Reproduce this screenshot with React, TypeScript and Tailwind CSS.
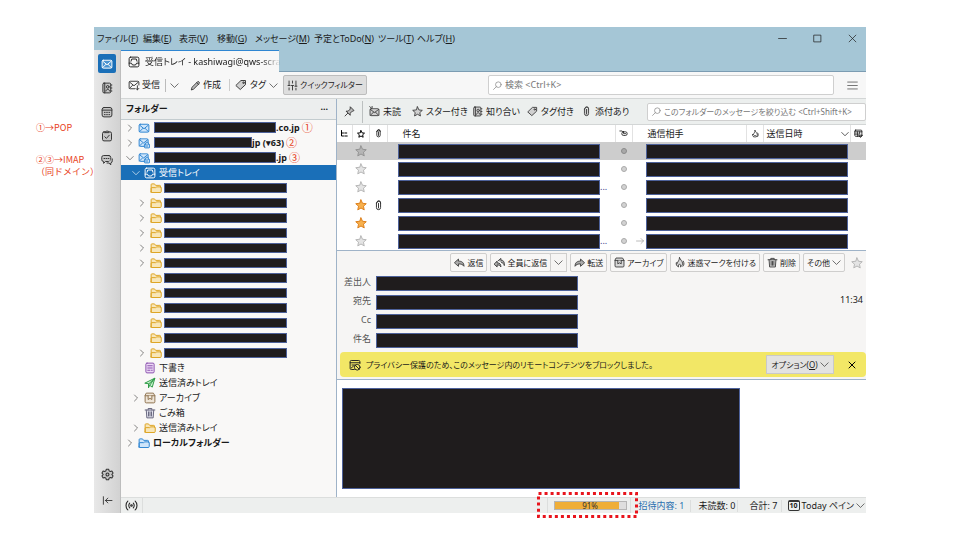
import type { ReactNode } from 'react';
import clsx from 'clsx';

const icons: Record<string, ReactNode> = {
  mail: <><rect x="1.5" y="3" width="13" height="10.5" rx="1.5" /><path d="M2 4l6 5 6-5M2 13l4.5-4.5M14 13L9.5 8.5" /></>,
  getMail: <><path d="M9 13H3a1.5 1.5 0 0 1-1.5-1.5v-7A1.5 1.5 0 0 1 3 3h10a1.5 1.5 0 0 1 1.5 1.5V8" /><path d="M2 4l6 5 6-5M2 12.5l4-4M12.5 9v5.5M10.5 12.5l2 2 2-2" /></>,
  imap: <><rect x="1.5" y="2.5" width="12" height="10" rx="1.5" /><path d="M2 3.5l5.5 4.5L13 3.5M2 12l4-4" /><rect x="8.5" y="9.5" width="7" height="5" rx="1" fill="#cfe5fa" /><path d="M10 9.5l1-2.5h2l1 2.5M10 12h3" /></>,
  address: <><rect x="2.5" y="1.5" width="10.5" height="13" rx="1.5" /><path d="M5 1.5v13M13 4h1.5M13 8h1.5M13 12h1.5M6.5 12c.3-3 4.7-3 5 0" /><circle cx="9" cy="6.5" r="1.8" /></>,
  calendar: <><rect x="1.5" y="2" width="13" height="12.5" rx="2.5" /><path d="M1.5 5.5h13" /><path d="M4.5 8.5h7M4.5 11.5h7" strokeDasharray="1 2" /></>,
  tasks: <><rect x="2" y="2.5" width="12" height="12" rx="2" /><path d="M5.5 2.5c0-1.5 5-1.5 5 0v1h-5zM5 9l2.2 2.2L11 7" /></>,
  chat: <><path d="M10.5 2h-7A2.5 2.5 0 0 0 1 4.5v3A2.5 2.5 0 0 0 3.5 10v2.5L6 10h4.500A2.500 2.500 0 0 0 13 7.500v-3A2.500 2.500 0 0 0 10.500 2z" /><path d="M15 6.5V9a3 3 0 0 1-2 3v2.500L10.500 12H8" /><path d="M4 6h6.500" strokeDasharray="1 1.800" /></>,
  gear: <><path d="M6.6 1.5h2.8l.6 2 1.4.8 2-.5 1.4 2.4L13.3 8l1.5 1.8-1.4 2.4-2-.5-1.4.8-.6 2H6.6l-.6-2-1.4-.8-2 .5-1.4-2.4L2.700 8 1.200 6.200l1.400-2.400 2 .5L6 3.500z" /><circle cx="8" cy="8" r="1.8" /></>,
  collapse: <path d="M2 2.5v11M14.5 8H5M8.5 4.5L5 8l3.5 3.5" />,
  inbox: <><rect x="1.5" y="1.5" width="13" height="13" rx="2" /><path d="M1.5 9.5h3L6 12h4l1.5-2.5h3M4 7l1-3h6l1 3" /></>,
  pencil: <path d="M2 14l1-3.5L11 2.5c1.2-1 3.5 1 2.5 2.5L5.5 13zM10 4l2.5 2.5" />,
  tag: <><path d="M8.5 2H14v5.5l-7 6.5L1.5 9z" /><circle cx="11.3" cy="5" r="1" /></>,
  sliders: <path d="M3 1.5V8M3 11.5v3M1.5 8h3M8 1.5v3M8 8v6.5M6.5 8h3M13 1.5V9M13 12v2.5M11.5 9h3" />,
  search: <><circle cx="9.5" cy="6.5" r="5" /><path d="M6 10l-5 5" /></>,
  menu: <path d="M1 3h14M1 8h14M1 13h14" />,
  pin: <path d="M9.5 1.5l5 5-1.5 1h-1l-3 3v3l-6-6h3l3-3v-1zM5.500 10.500l-4 4" />,
  unread: <><rect x="1.5" y="4" width="13" height="10" rx="1.5" /><path d="M2 5l6 4.5L14 5M2 13.5L6.500 9M14 13.500L9.500 9M1 1l2.500 2M4.500 .5V3" /></>,
  star: <path d="M8 1.2l2 4.500 5 .6-3.700 3.300 1 4.900L8 12l-4.300 2.500 1-4.900L1 6.300l5-.6z" />,
  clip: <path d="M5 4.5V11a3 3 0 0 0 6 0V4a2.500 2.500 0 0 0-5-.5M8 5v6.500M5 4.500C5 .5 11 .5 11 4.500" />,
  thread: <path d="M3 1v11h4M3 6h4M9.5 6h4M9.5 12h5" />,
  read: <><path d="M1.5 3.5h4l3 3" /><rect x="5" y="5" width="9.5" height="6.5" rx="3" /><path d="M8 8.3h4" /></>,
  flame: <path d="M8 1c1 3 4 4.500 4.500 8 .3 2.500-1.500 4.500-3 5.500.5-2-.5-3.500-1.500-4.500-1 1-2 2.500-1.500 4.500C4 13 2.500 11 3.500 8l1 1.500C5.500 6.500 8 5 8 1zM13.500 6c1.500 3 1.500 5.500-.5 7.500" />,
  picker: <><rect x="1.5" y="2" width="12.5" height="11" rx="1.5" /><path d="M1.5 5H14M1.500 9h7M6 5v8M10 5v4M9 11h6l-3 3.500z" /></>,
  folder: <path d="M1.5 13V3.5a1 1 0 0 1 1-1H6l1.500 2H13a1 1 0 0 1 1 1V7M1.500 13.500v-5a1 1 0 0 1 1-1h5l1.500-1h5a1 1 0 0 1 1 1v5a1.500 1.500 0 0 1-1.500 1.500h-11a1 1 0 0 1-1-.5z" />,
  drafts: <><rect x="2.5" y="1.5" width="11" height="13" rx="1.5" /><path d="M5 5h6M5 8h6M5 11h3M10 11h1" /></>,
  sent: <path d="M1.5 8l13-6.500L11 13.500 7.500 11 6 14.500v-5zM6 9.500l8.500-8L7.500 11" />,
  archive: <><path d="M3.5 1.5h9l2 3.500v8a1.500 1.500 0 0 1-1.500 1.500H3A1.500 1.500 0 0 1 1.500 13V5zM1.500 5h13" /><path d="M5.500 5v5L8 8.500l2.500 1.500V5" /></>,
  trash: <path d="M1.5 4h13M5.5 4V2h5v2M3 4l.8 10.500h8.400L13 4M6 6.500V12M8 6.500V12M10 6.500V12" />,
  reply: <path d="M1 8l5.500-5v3c5 0 8 2 8 7.500C13 11 10.500 10 6.500 10v3z" />,
  replyAll: <path d="M.5 10l4-4v2.500c4 0 5.500 2 5.500 6-1-2-2.500-3-5.500-3V14zM6 5.500L10 2v2.500c4 0 5.500 3 5 8-.5-2.500-2-4-4-4.500" />,
  forward: <path d="M15 8L9.500 3v3c-5 0-8 2-8 7.500C3 11 5.500 10 9.500 10v3z" />,
  blocked: <><path d="M7 14H3a1.500 1.500 0 0 1-1.500-1.500v-9A1.500 1.500 0 0 1 3 2h10a1.500 1.500 0 0 1 1.500 1.500V6M1.500 5h13M4 8h4M3 12l3-2.500" /><circle cx="11" cy="11" r="3.8" /><path d="M8.5 8.5l5 5" /></>,
  close: <path d="M2 2l12 12M14 2L2 14" />,
  online: <><path d="M3.500 2.500C.5 5 .5 11 3.500 13.500M12.500 2.500c3 2.500 3 8.500 0 11M5.800 5c-1.500 1.500-1.500 4.500 0 6M10.200 5c1.500 1.500 1.500 4.500 0 6" /><circle cx="8" cy="8" r="1" /></>,
  right: <path d="M5 2l6 6-6 6" />,
  down: <path d="M1.500 5L8 11.500 14.500 5" />,
  minimize: <path d="M1 8h14" />,
  maximize: <rect x="2" y="2" width="12" height="12" />,
  arrow: <path d="M1 8h14M10 3l5 5-5 5" />,
};

function Icon({ name, className = 'size-3 fill-none text-[#3c3c3c]' }: { name: string; className?: string }) {
  return (
    <svg viewBox="0 0 16 16" className={clsx('shrink-0', className)} stroke="currentColor" strokeWidth="1.3" strokeLinejoin="round" strokeLinecap="round" aria-hidden="true">
      {icons[name]}
    </svg>
  );
}

// Black strip that hides private data
function Redacted({ className }: { className: string }) {
  return <span className={clsx('block shrink-0 border border-[#4d619a] bg-[#1f1c1d]', className)} />;
}

const menus = [
  { label: 'ファイル', key: 'F', width: 'w-[46px]' },
  { label: '編集', key: 'E', width: 'w-[36px]' },
  { label: '表示', key: 'V', width: 'w-[38px]' },
  { label: '移動', key: 'G', width: 'w-[38px]' },
  { label: 'メッセージ', key: 'M', width: 'w-[59px]' },
  { label: '予定とToDo', key: 'N', width: 'w-[64px]' },
  { label: 'ツール', key: 'T', width: 'w-[39px]' },
  { label: 'ヘルプ', key: 'H', width: 'w-[39px]' },
];

const spaces = [
  { icon: 'mail', label: 'メール' },
  { icon: 'address', label: 'アドレス帳' },
  { icon: 'calendar', label: 'カレンダー' },
  { icon: 'tasks', label: 'ToDo' },
  { icon: 'chat', label: 'チャット' },
];

const accounts = [
  { icon: 'mail', open: false, bar: 'w-[122px]', name: '.co.jp', mark: '①' },
  { icon: 'imap', open: false, bar: 'w-[98px]', name: 'jp (▾63)', mark: '②' },
  { icon: 'imap', open: true, bar: 'w-[122px]', name: '.jp', mark: '③' },
];

const subfolders = [false, true, true, true, true, true, false, false, false, false, false, true];

const systemFolders = [
  { icon: 'drafts', name: '下書き', color: 'size-3 fill-[#ecd9f5] text-[#8a4fae]' },
  { icon: 'sent', name: '送信済みトレイ', color: 'size-3 fill-[#c9f0cf] text-[#2c9a45]' },
  { icon: 'archive', name: 'アーカイブ', color: 'size-3 fill-[#eee5d8] text-[#8f7350]', expand: true },
  { icon: 'trash', name: 'ごみ箱', color: 'size-3 fill-[#e2e2ee] text-[#67677e]' },
  { icon: 'folder', name: '送信済みトレイ', color: 'size-3 fill-[#f8e6b8] text-[#dda321]', expand: true },
];

const filters = [
  { icon: 'unread', label: '未読', width: 'w-[43px]' },
  { icon: 'star', label: 'スター付き', width: 'w-[60px]' },
  { icon: 'address', label: '知り合い', width: 'w-[55px]' },
  { icon: 'tag', label: 'タグ付き', width: 'w-[54px]' },
  { icon: 'clip', label: '添付あり', width: 'w-[50px]' },
];

const messages = [
  { selected: true },
  {},
  { more: true },
  { starred: true, attachment: true },
  { starred: true },
  { more: true, sent: true },
] as { selected?: boolean; starred?: boolean; attachment?: boolean; more?: boolean; sent?: boolean }[];

const headers = ['差出人', '宛先', 'Cc', '件名'];

const blueIcon = 'size-3 fill-[#cfe5fa] text-[#2f86d2]';
const chevron = 'size-[9px] fill-none text-[#3c3c3c]';
const actionButton = 'flex h-[19px] items-center gap-[2px] rounded-xs border border-[#cfcecd] bg-[#f8f7f6] px-[3px] whitespace-nowrap';

function Twisty({ open, show = true, light = false }: { open?: boolean; show?: boolean; light?: boolean }) {
  if (!show) return <span className="w-2 shrink-0" />;
  return (
    <button aria-label="展開" className="shrink-0">
      <Icon name={open ? 'down' : 'right'} className={clsx('size-2 fill-none', light ? 'text-white' : 'text-[#444]')} />
    </button>
  );
}

function FolderPane() {
  return (
    <nav className="w-[216px] shrink-0 border-r border-[#9fb3c8] bg-[#f9f8f7]">
      <div className="flex h-[21px] items-center justify-between border-b border-[#c3cccf] bg-[#eceeee] pr-2 pl-[5px]">
        <h2 className="font-bold">フォルダー</h2>
        <button aria-label="フォルダーペインのオプション" className="font-bold">···</button>
      </div>
      <ul>
        {accounts.map((account) => (
          <li key={account.mark} className="flex h-[15px] items-center gap-1 pl-[5px] font-bold">
            <Twisty open={account.open} />
            <Icon name={account.icon} className={blueIcon} />
            <span className="flex items-center">
              <Redacted className={clsx('h-[11px]', account.bar)} />
              {account.name}
              <span className="ml-[2px] text-[11px] font-normal text-[#e8421c]">{account.mark}</span>
            </span>
          </li>
        ))}
        <li className="flex h-[15px] items-center bg-[#1a6fb8] pl-[11px] text-white">
          <Twisty open light />
          <Icon name="inbox" className="mr-[3px] ml-1 size-3 fill-none text-white" />
          受信トレイ
        </li>
        {subfolders.map((expand, i) => (
          <li key={i} className="flex h-[15px] items-center pl-[17px]">
            <Twisty show={expand} />
            <Icon name="folder" className="mr-[2px] ml-1 size-3 fill-[#f8e6b8] text-[#dda321]" />
            <Redacted className="h-[10px] w-[123px]" />
          </li>
        ))}
        {systemFolders.map((folder, i) => (
          <li key={i} className="flex h-[15px] items-center pl-[11px]">
            <Twisty show={!!folder.expand} />
            <Icon name={folder.icon} className={clsx('mr-[3px] ml-1', folder.color)} />
            {folder.name}
          </li>
        ))}
        <li className="flex h-[15px] items-center pl-[5px] font-bold">
          <Twisty />
          <Icon name="folder" className="mr-[3px] ml-1 size-3 fill-[#cfe5fa] text-[#2f86d2]" />
          ローカルフォルダー
        </li>
      </ul>
    </nav>
  );
}

function MessageList() {
  const th = 'border-r border-[#e2e2e2] p-0 font-normal';
  return (
    <table className="w-full table-fixed border-collapse bg-white text-left">
      <colgroup>
        <col className="w-[15px]" />
        <col className="w-[17px]" />
        <col className="w-[18px]" />
        <col />
        <col className="w-[17px]" />
        <col className="w-[114px]" />
        <col className="w-[17px]" />
        <col className="w-[87px]" />
        <col className="w-[16px]" />
      </colgroup>
      <thead>
        <tr className="h-[17px]">
          <th className={th}><Icon name="thread" className="mx-auto size-2 fill-none stroke-2 text-black" /></th>
          <th className={th}><Icon name="star" className="mx-auto size-2 fill-none stroke-2 text-black" /></th>
          <th className={th}><Icon name="clip" className="mx-auto size-[9px] fill-none text-black" /></th>
          <th className={clsx(th, 'pl-[15px]')}>件名</th>
          <th className={th}><Icon name="read" className="mx-auto size-[9px] fill-none text-black" /></th>
          <th className={clsx(th, 'pl-[15px]')}>通信相手</th>
          <th className={th}><Icon name="flame" className="mx-auto size-2 fill-none text-black" /></th>
          <th className={clsx(th, 'pl-[3px]')}>
            <span className="flex items-center justify-between pr-px">
              送信日時
              <Icon name="down" className="size-2 fill-none text-black" />
            </span>
          </th>
          <th className="p-0"><Icon name="picker" className="mx-auto size-[9px] fill-none text-black" /></th>
        </tr>
      </thead>
      <tbody>
        {messages.map((m, i) => (
          <tr key={i} className={clsx('h-[18px]', m.selected && 'bg-[#cdcdcd]')}>
            <td className="p-0" />
            <td className="p-0">
              <Icon
                name="star"
                className={clsx('mx-auto size-3', m.starred ? 'fill-[#f7b04d] text-[#dc7e1b]' : m.selected ? 'fill-[#b5b5b5] text-[#929292]' : 'fill-[#e4e4e4] text-[#b5b5b5]')}
              />
            </td>
            <td className="p-0">{m.attachment && <Icon name="clip" className="mx-auto size-[11px] fill-none text-[#222]" />}</td>
            <td className="p-0 pl-[11px]">
              <span className="flex items-center text-[#3a3a8c]">
                <Redacted className="h-[15px] w-[202px]" />
                {m.more && '...'}
              </span>
            </td>
            <td className="p-0"><span className={clsx('mx-auto block size-[6px] rounded-full border', m.selected ? 'border-[#8a8a8a] bg-[#a8a8a8]' : 'border-[#aaa] bg-[#d2d2d2]')} /></td>
            <td className="p-0" colSpan={3}>
              <span className="flex items-center gap-[2px] pl-1">
                <span className="w-2">{m.sent && <Icon name="arrow" className="size-2 fill-none text-[#999]" />}</span>
                <Redacted className="h-[15px] w-[202px]" />
              </span>
            </td>
            <td className="p-0" />
          </tr>
        ))}
      </tbody>
    </table>
  );
}

function MessagePane() {
  return (
    <article className="flex grow flex-col border-t border-[#9fb3c8] bg-[#f6f5f4]">
      <div className="flex h-[23px] items-center justify-end gap-[3px] pr-[3px] text-[8px]">
        <button className={actionButton}><Icon name="reply" className="size-[11px] fill-[#aaa] text-[#3c3c3c]" />返信</button>
        <div className="flex">
          <button className={actionButton}><Icon name="replyAll" className="size-[11px] fill-[#aaa] text-[#3c3c3c]" />全員に返信</button>
          <button aria-label="返信オプション" className="-ml-px border border-[#cfcecd] px-[3px]"><Icon name="down" className={chevron} /></button>
        </div>
        <button className={actionButton}><Icon name="forward" className="size-[11px] fill-[#aaa] text-[#3c3c3c]" />転送</button>
        <button className={actionButton}><Icon name="archive" className="size-[11px] fill-[#d8d8d8] text-[#3c3c3c]" />アーカイブ</button>
        <button className={actionButton}><Icon name="flame" className="size-[11px] fill-[#d8d8d8] text-[#3c3c3c]" />迷惑マークを付ける</button>
        <button className={actionButton}><Icon name="trash" className="size-[11px] fill-[#d8d8d8] text-[#3c3c3c]" />削除</button>
        <button className={actionButton}>その他<Icon name="down" className={chevron} /></button>
        <button aria-label="スター" className="ml-[3px]"><Icon name="star" className="size-3 fill-[#e4e4e4] text-[#b5b5b5]" /></button>
      </div>

      <div className="flex justify-between pr-[3px] pb-[2px]">
        <dl>
          {headers.map((name) => (
            <div key={name} className="flex h-[19px] items-center">
              <dt className="w-[34px] pb-1 text-right text-[#555]">{name}</dt>
              <dd className="ml-[5px]"><Redacted className="h-[15px] w-[202px]" /></dd>
            </div>
          ))}
        </dl>
        <time className="pt-5">11:34</time>
      </div>

      <div className="mb-[2px] ml-[3px] flex h-[25px] items-center rounded-sm bg-[#f2e766] pl-[9px] pr-[10px] text-[8px]">
        <Icon name="blocked" className="size-3 fill-none text-[#222]" />
        <p className="ml-[5px] grow whitespace-nowrap">プライバシー保護のため、このメッセージ内のリモートコンテンツをブロックしました。</p>
        <button className="flex h-[19px] w-[68px] items-center justify-center gap-[2px] border border-[#c9c9c9] bg-[#e2e2e1] whitespace-nowrap">
          <span>オプション(<u>O</u>)</span>
          <Icon name="down" className={chevron} />
        </button>
        <button aria-label="閉じる" className="ml-[14px]"><Icon name="close" className="size-2 fill-none stroke-2 text-black" /></button>
      </div>

      <div className="grow border-t border-[#9fb3c8] bg-white pt-2 pb-2 pl-[5px]">
        <Redacted className="h-[101px] w-[398px]" />
      </div>
    </article>
  );
}

function StatusBar() {
  return (
    <footer className="flex h-4 items-center border-t border-[#dcdedd] bg-[#edefee]">
      <button aria-label="オンライン" className="flex h-full w-[22px] items-center border-r border-[#dcdedd] pl-1"><Icon name="online" className="size-[13px] fill-none text-[#222]" /></button>
      <div className="relative ml-auto flex h-full w-[84px] items-center border-x border-[#dcdedd] pr-[3px] pl-[6px]">
        <div role="progressbar" aria-valuenow={91} aria-valuemin={0} aria-valuemax={100} aria-label="使用量" className="relative h-[9px] w-full border border-[#b5b5b5] bg-[#dedede]">
          <div className="h-full bg-[#efae38]" style={{ width: '91%' }} />
          <span className="absolute inset-0 text-center text-[8px] leading-[8px] text-[#333]">91%</span>
        </div>
        {/* quota highlight */}
        <svg className="absolute -top-[6px] -left-[11px] h-[26px] w-[101px]" viewBox="0 0 101 26" aria-hidden="true">
          <rect x="1.5" y="1.5" width="98" height="23" fill="none" stroke="#e8141c" strokeWidth="3" strokeDasharray="3 3.050" />
        </svg>
      </div>
      <a href="#invitations" className="w-[60px] border-r border-[#dcdedd] pl-2 whitespace-nowrap text-[#2a6fb0]">招待内容: 1</a>
      <span className="w-[47px] border-r border-[#dcdedd] pl-2 whitespace-nowrap">未読数: 0</span>
      <span className="w-[44px] border-r border-[#dcdedd] pl-3 whitespace-nowrap">合計: 7</span>
      <button className="flex items-center gap-[2px] pr-px pl-[6px] whitespace-nowrap">
        <span className="block w-3 rounded-xs border border-t-2 border-[#333] text-center text-[7px] leading-[8px] font-bold">10</span>
        Today ペイン
        <Icon name="down" className={chevron} />
      </button>
    </footer>
  );
}

export default function App() {
  return (
    <div className="flex bg-white text-[9px] leading-[12px] text-[#1a1a1a] [font-family:'Noto_Sans','Noto_Sans_CJK_JP',sans-serif] [font-feature-settings:'palt']">
      <aside className="w-[94px] shrink-0 pt-[122px] pl-9 whitespace-nowrap text-[#e8421c] [font-family:'Noto_Sans_CJK_JP',sans-serif] [font-feature-settings:normal]">
        <p>①→POP</p>
        <p className="mt-5">②③→IMAP</p>
        <p>（同ドメイン）</p>
      </aside>

      <div className="mt-[27px] mr-[94px] mb-[27px] flex min-w-0 grow flex-col">
        <header className="flex h-[23px] items-center justify-between bg-[#a5c6d6] pl-[3px]">
          <div className="flex">
            {menus.map((menu) => (
              <button key={menu.key} className={clsx('text-left whitespace-nowrap', menu.width)}>
                {menu.label}(<u>{menu.key}</u>)
              </button>
            ))}
          </div>
          <div className="flex items-center gap-[26px] pr-[9px]">
            <button aria-label="最小化"><Icon name="minimize" className="size-[9px] fill-none text-[#222]" /></button>
            <button aria-label="最大化"><Icon name="maximize" className="size-[9px] fill-none text-[#222]" /></button>
            <button aria-label="閉じる"><Icon name="close" className="size-[9px] fill-none text-[#222]" /></button>
          </div>
        </header>

        <div className="flex">
          <nav className="flex w-[27px] shrink-0 flex-col items-center border-r border-[#bdbdbd] bg-linear-to-r from-[#e8e8e8] to-[#d2d2d2] pt-1 pb-[7px]">
            {spaces.map((space, i) => (
              <button
                key={space.icon}
                aria-label={space.label}
                className={clsx('mb-[5px] flex h-[19px] w-[18px] items-center justify-center rounded-xs', i === 0 && 'bg-[#1a6fb8]')}
              >
                <Icon name={space.icon} className={clsx('size-3', i === 0 ? 'fill-[#4a93d0] text-white' : 'fill-[#c6c6c6] text-[#333]')} />
              </button>
            ))}
            <button aria-label="設定" className="mt-auto"><Icon name="gear" className="size-[13px] fill-[#c6c6c6] text-[#333]" /></button>
            <button aria-label="折りたたむ" className="mt-[14px]"><Icon name="collapse" className="size-[11px] fill-none text-[#333]" /></button>
          </nav>

          <div className="flex min-w-0 grow flex-col">
            <div className="flex h-[22px] border-b border-[#7c9cb2] bg-[#a5c6d6]">
              <div className="-mb-px flex w-[158px] items-center gap-[5px] border-t border-[#2f86d2] bg-[#f7f7f7] pl-[7px] whitespace-nowrap">
                <Icon name="inbox" className="size-3 fill-none text-[#222]" />
                <span className="mask-r-from-85%">受信トレイ - kashiwagi@qws-scra</span>
              </div>
            </div>

            <div className="flex h-[27px] items-center border-b border-[#d3d6d6] bg-[#f7f7f7] pl-[7px]">
              <button className="flex items-center gap-[2px]"><Icon name="getMail" />受信</button>
              <button aria-label="受信オプション" className="ml-[5px] border-l border-[#bbb] py-[2px] pl-1"><Icon name="down" className={chevron} /></button>
              <button className="ml-[11px] flex items-center gap-[2px]"><Icon name="pencil" className="size-[11px] fill-[#bbb] text-[#333]" />作成</button>
              <button className="ml-2 flex items-center gap-[3px] border-l border-[#ccc] pl-[5px]">
                <Icon name="tag" className="size-3 fill-[#d0d0d0] text-[#3c3c3c]" />
                タグ
                <Icon name="down" className={chevron} />
              </button>
              <button className="ml-[5px] flex h-5 items-center gap-[2px] rounded-xs border border-[#bdbdbd] bg-[#dedede] px-[3px] text-[8px] whitespace-nowrap">
                <Icon name="sliders" className="size-[11px] fill-none text-[#333]" />
                クイックフィルター
              </button>
              <label className="mr-[13px] ml-auto flex h-5 w-[346px] items-center gap-[3px] rounded-xs border border-[#cfcfcf] bg-white px-1">
                <Icon name="search" className="size-[9px] fill-none text-[#888]" />
                <input type="text" aria-label="検索" placeholder="検索 <Ctrl+K>" className="w-full outline-none placeholder:text-[#777]" />
              </label>
              <button aria-label="メニュー" className="mr-2"><Icon name="menu" className="size-[11px] fill-none text-[#666]" /></button>
            </div>

            <div className="flex">
              <FolderPane />
              <main className="flex min-w-0 grow flex-col">
                <div className="flex h-[26px] items-center border-b border-[#d3d6d6] bg-[#ecefee]">
                  <button aria-label="固定" className="mr-[6px] flex h-[22px] w-[26px] items-center border-r border-[#bcc0c0] pl-[7px]"><Icon name="pin" className="size-[11px] fill-[#bbb] text-[#333]" /></button>
                  {filters.map((filter) => (
                    <button key={filter.label} className={clsx('flex shrink-0 items-center gap-[3px] whitespace-nowrap', filter.width)}>
                      <Icon name={filter.icon} className="size-[11px] fill-[#d0d0d0] text-[#3c3c3c]" />
                      {filter.label}
                    </button>
                  ))}
                  <label className="ml-auto flex h-[18px] w-[219px] items-center gap-[3px] rounded-xs border border-[#cfcfcf] bg-white px-1 text-[8px]">
                    <Icon name="search" className="size-[9px] fill-none text-[#888]" />
                    <input type="text" aria-label="メッセージの絞り込み" placeholder="このフォルダーのメッセージを絞り込む <Ctrl+Shift+K>" className="w-full outline-none placeholder:text-[#777]" />
                  </label>
                </div>
                <MessageList />
                <MessagePane />
              </main>
            </div>

            <StatusBar />
          </div>
        </div>
      </div>
    </div>
  );
}
